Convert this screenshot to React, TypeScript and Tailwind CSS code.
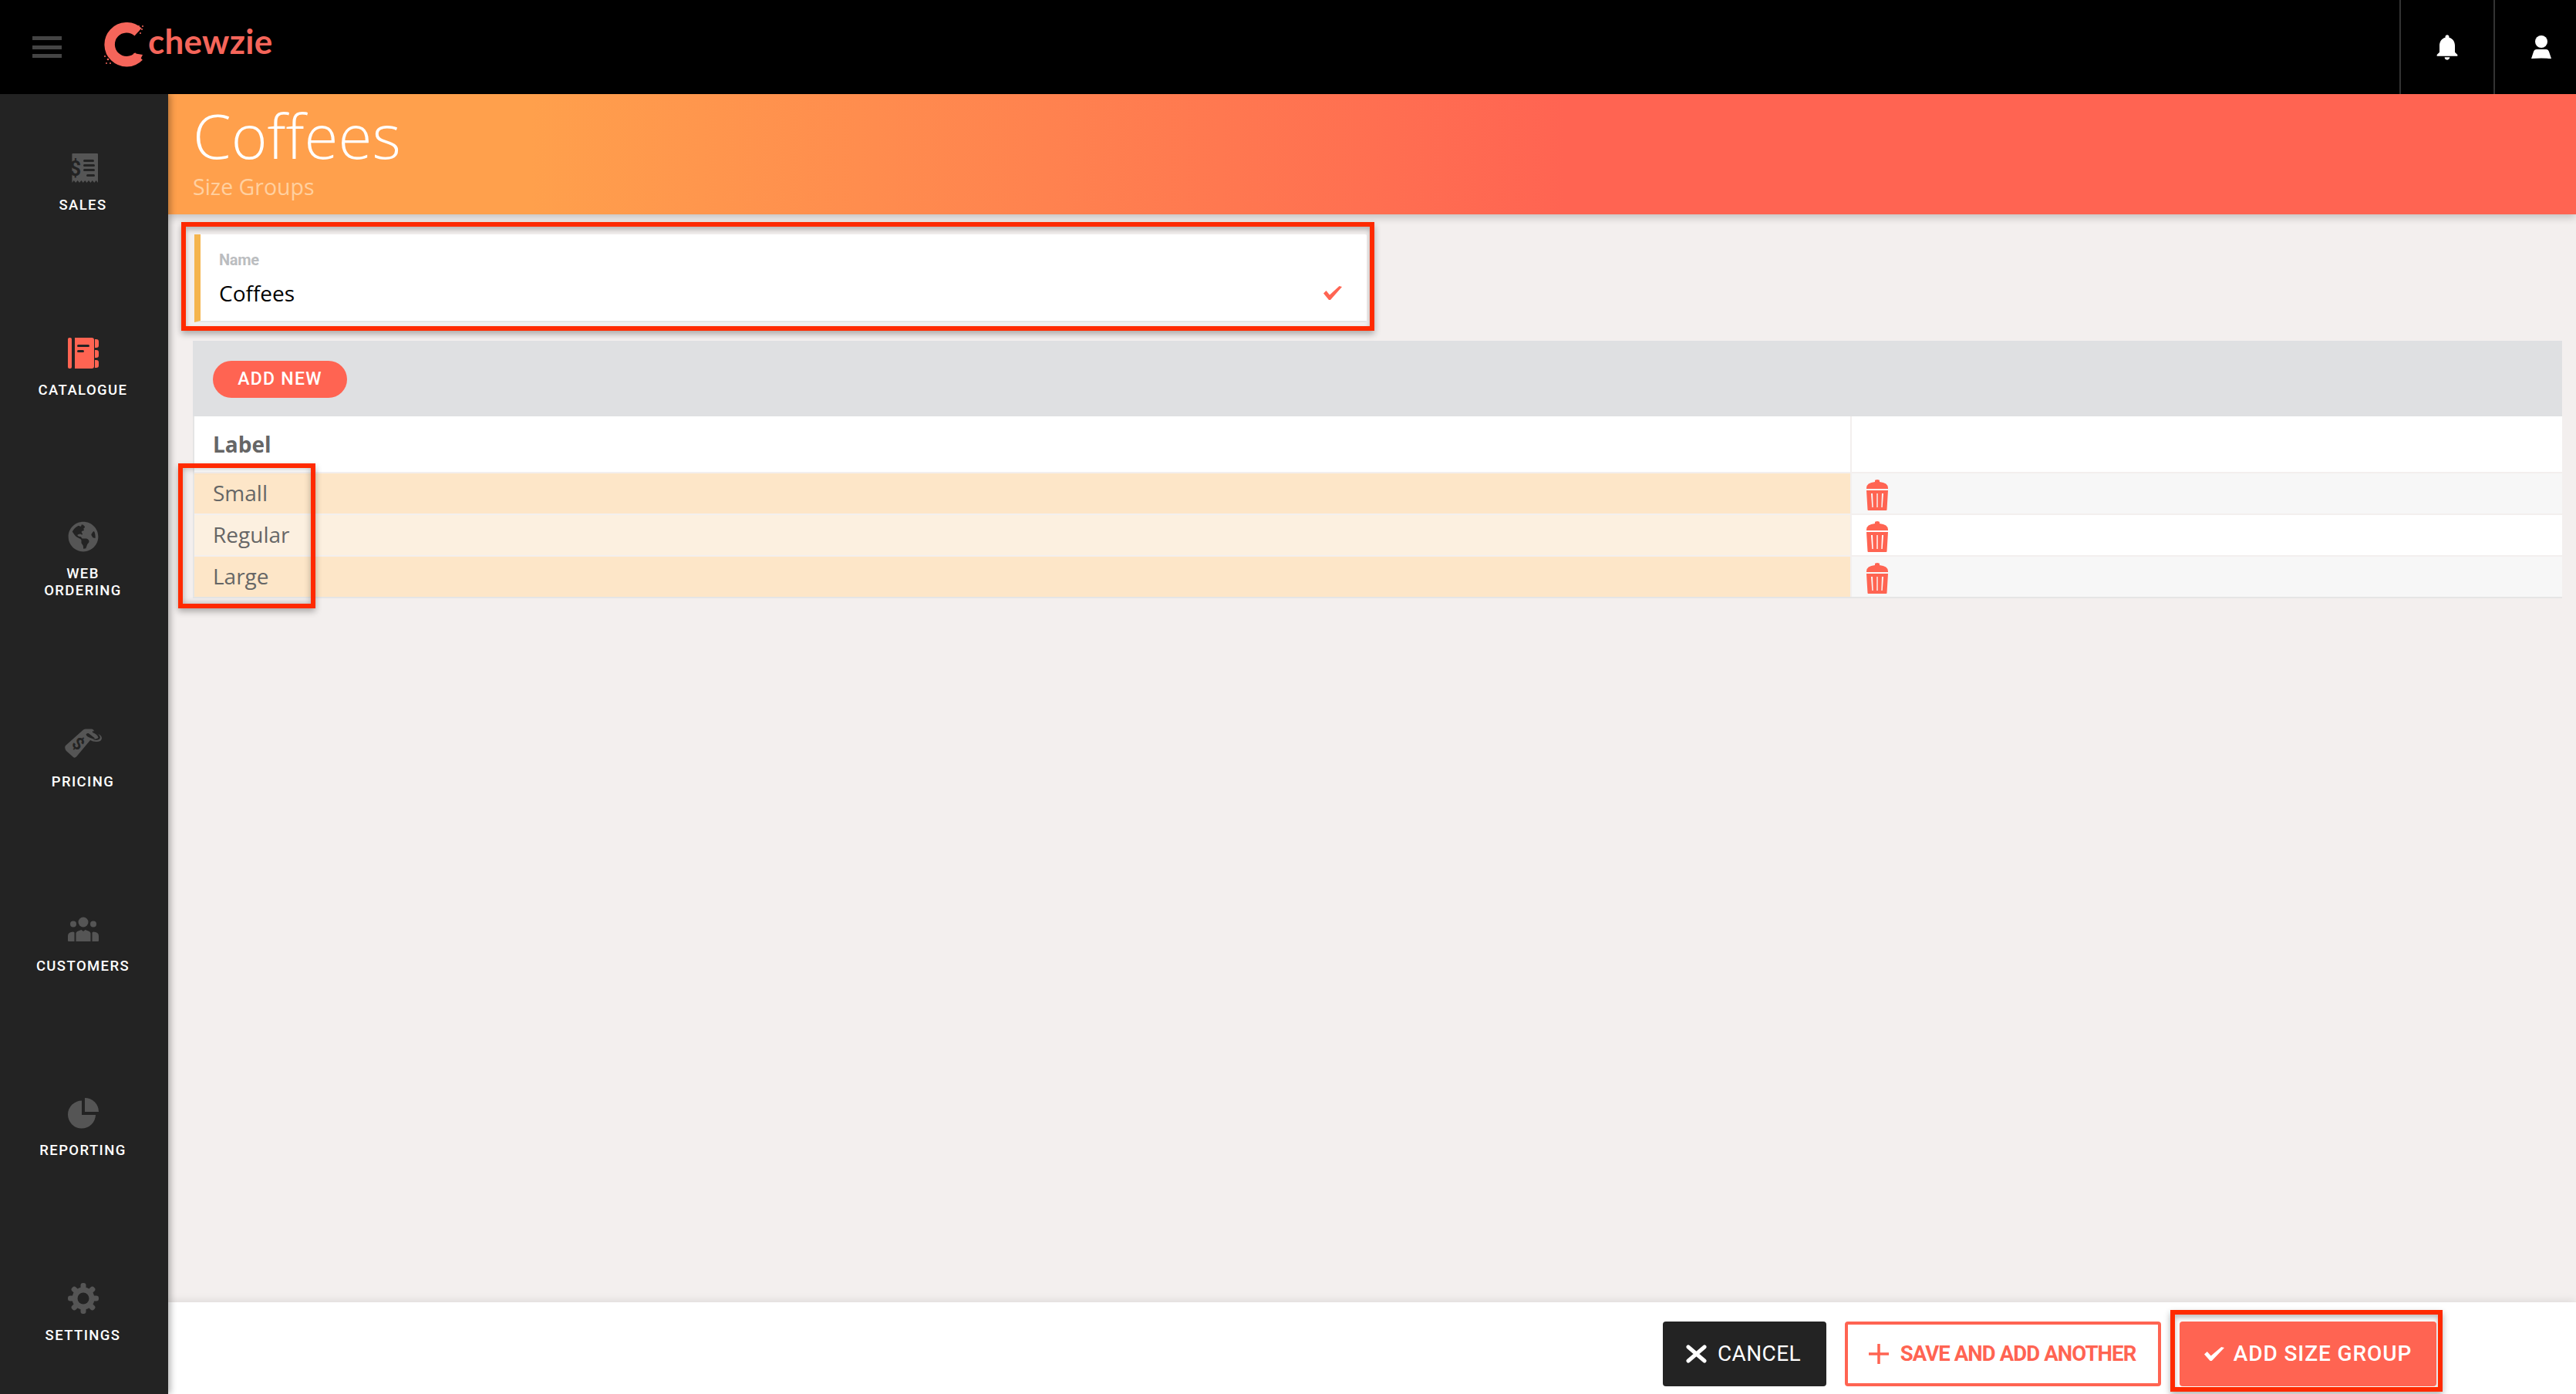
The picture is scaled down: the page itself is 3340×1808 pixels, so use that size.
import React from "react";
import { MdNotifications } from "react-icons/md";
import { FaGlobeAmericas } from "react-icons/fa";

const Receipt = () => (
  <svg viewBox="0 0 40 40" className="w-[40px] h-[40px]" fill="#555">
    <path d="M2 1h36a1 1 0 0 1 1 1v37l-2.400-3-2.400 3-2.400-3-2.400 3-2.400-3-2.400 3-2.400-3-2.400 3-2.400-3-2.400 3-2.400-3-2.400 3-2.400-3-2.400 3V2a1 1 0 0 1 1-1z" />
    <text x="9.500" y="30" fontSize="27" fontWeight="700" fontFamily="Roboto, sans-serif" textAnchor="middle" fill="#232323">$</text>
    <g fill="#232323">
      <rect x="20" y="9" width="14" height="3" rx="1.500" />
      <rect x="20" y="15" width="15" height="3" rx="1.500" />
      <rect x="20" y="21" width="15" height="3" rx="1.500" />
      <rect x="24" y="28" width="11" height="3" rx="1.500" />
    </g>
  </svg>
);

const Catalogue = () => (
  <svg viewBox="0 0 40 40" className="w-[40px] h-[40px]" fill="#ff6452">
    <rect x="0" y="0" width="5" height="40" rx="2" />
    <path d="M9 0h22a3 3 0 0 1 3 3v34a3 3 0 0 1-3 3H9z" />
    <path d="M35 2h2a3 3 0 0 1 3 3v5a3 3 0 0 1-3 3h-2zM35 16h2a3 3 0 0 1 3 3v4a3 3 0 0 1-3 3h-2zM35 29h2a3 3 0 0 1 3 3v4a3 3 0 0 1-3 3h-2z" />
    <rect x="12" y="9" width="16" height="3" rx="1.500" fill="#232323" />
    <rect x="12" y="16" width="9" height="3" rx="1.500" fill="#232323" />
  </svg>
);

const Tag = () => (
  <svg viewBox="0 0 48 40" className="w-[48px] h-[40px] -mt-[3px]" fill="#555">
    <path d="M1 22 24 1.500Q25.500.5 27 .5L35 .5Q38 1 38 4L41 6Q48 8 48 12.500 47.500 17 41 17 36 17 33 15L15 36.500Q13 38.500 11 37L2 29Q-1 25 1 22z" />
    <path d="M27.500 7.500Q30 5 32 7L39 12.500Q37 14 33 12 28 10 27.500 7.500z" fill="#232323" />
    <path d="M36 3Q44 5 46 11 46 14.500 41 15 38.500 15 36 13.500 42 14 43.500 11.500 42 7 36 5z" fill="#232323" />
    <text x="17" y="27" fontSize="22" fontWeight="700" fontFamily="Roboto, sans-serif" textAnchor="middle" fill="#232323" transform="rotate(40 17 20)">$</text>
  </svg>
);

const Customers = () => (
  <svg viewBox="0 0 40 40" className="w-[40px] h-[40px]" fill="#555">
    <circle cx="20" cy="11" r="6.500" />
    <circle cx="7" cy="13.500" r="4" />
    <circle cx="33" cy="13.500" r="4" />
    <path d="M10.500 26q0-2.500 3-3.500l4-1.500 2.500 2 2.500-2 4 1.500q3 1 3 3.500V36h-19z" />
    <path d="M0 29q0-4 4-5l3-.5 1.500 1v11.500H1q-1 0-1-1zM40 29q0-4-4-5l-3-.5-1.500 1v11.500H39q1 0 1-1z" />
  </svg>
);

const Pie = () => (
  <svg viewBox="0 0 40 40" className="w-[40px] h-[40px]" fill="#555">
    <path d="M18 3.600V22h18A18 18 0 1 1 18 3.600z" />
    <path d="M22 0a18 18 0 0 1 18 18H22z" />
  </svg>
);

const Gear = () => (
  <svg viewBox="0 0 40 40" className="w-[40px] h-[40px]">
    <g fill="#555">
      <circle cx="20" cy="20" r="14.500" />
      {[0, 45, 90, 135, 180, 225, 270, 315].map((a) => (
        <rect key={a} x="16.500" y="0" width="7" height="10" rx="3" transform={`rotate(${a} 20 20)`} />
      ))}
    </g>
    <circle cx="20" cy="20" r="7.500" fill="#232323" />
  </svg>
);

const Trash = () => (
  <svg viewBox="0 0 28 40" className="w-[28px] h-[40px]" fill="#ff6452">
    <path d="M11 3V1.500Q11 0 14 0t3 1.500V3q11 1 11 8v1H0v-1q0-7 11-8z" />
    <path fillRule="evenodd" d="M0 14h28l-1.500 25q0 1-1 1h-23q-1 0-1-1zM6 18l1.300 18h1.400L8 18zM13.300 18v18h1.400V18zM20 18l-.700 18h1.400L22 18z" />
  </svg>
);

const Person = () => (
  <svg viewBox="0 0 26 30" className="w-[26px] h-[30px]" fill="#fff">
    <circle cx="13" cy="8" r="8" />
    <path d="M0 30 3 21Q4 18 7 18h12q3 0 4 3l3 9q-13-1-26 0z" />
  </svg>
);

const Check = ({ w, h, color }: { w: string; h: string; color: string }) => (
  <svg viewBox="0 0 24 18" preserveAspectRatio="none" className={`${w} ${h}`} fill={color}>
    <path d="M0 9.500 3.500 6 8 11.500 20.500 0 24 1 9 18H7z" />
  </svg>
);

const XIcon = () => (
  <svg viewBox="0 0 29 24" className="w-[29px] h-[24px]" fill="none" stroke="#fff" strokeWidth="5" strokeLinecap="round">
    <path d="M4 3 25 21M25 3 4 21" />
  </svg>
);

const PlusIcon = () => (
  <svg viewBox="0 0 26 26" className="w-[26px] h-[26px]" fill="none" stroke="#ff6452" strokeWidth="3.500">
    <path d="M13 0v26M0 13h26" />
  </svg>
);

const Logo = () => (
  <svg viewBox="0 0 54 58" className="w-[54px] h-[58px]" fill="none">
    <path d="M46 12.500A22 22 0 1 0 47 44" stroke="#f5655a" strokeWidth="13.500" />
    <path d="M40 40 52 42 47 52z" fill="#f5655a" />
    <g fill="#f5655a">
      <circle cx="46" cy="11" r="1" />
      <circle cx="49" cy="14" r="1" />
      <circle cx="51" cy="9" r="1" />
      <circle cx="47" cy="5" r="1" />
      <circle cx="52" cy="5" r="1" />
      <circle cx="3" cy="44" r="1" />
      <circle cx="7" cy="48" r="1.300" />
      <circle cx="10" cy="53" r="1" />
      <circle cx="5" cy="53" r="1" />
    </g>
  </svg>
);

const navItems = [
  { label: "SALES", icon: <Receipt />, h: "h-[240px]" },
  { label: "CATALOGUE", icon: <Catalogue />, h: "h-[238px]" },
  { label: "WEB ORDERING", icon: <FaGlobeAmericas size={40} color="#555" />, h: "h-[270px]" },
  { label: "PRICING", icon: <Tag />, h: "h-[239px]" },
  { label: "CUSTOMERS", icon: <Customers />, h: "h-[239px]" },
  { label: "REPORTING", icon: <Pie />, h: "h-[240px]" },
  { label: "SETTINGS", icon: <Gear />, h: "h-[80px]" },
];

const rows = [
  { label: "Small", bg: "bg-[#fde6c8]", cell: "bg-[#f7f7f7]" },
  { label: "Regular", bg: "bg-[#fcf0e0]", cell: "bg-white" },
  { label: "Large", bg: "bg-[#fde6c8]", cell: "bg-[#f7f7f7]" },
];

const sans = "font-['Open_Sans',sans-serif]";
const roboto = "font-['Roboto',sans-serif]";

export default function App() {
  return (
    <div className={`w-[3340px] h-[1808px] overflow-hidden flex flex-col bg-[#f3efee] ${sans}`}>
      <header className="h-[122px] shrink-0 bg-black flex items-center">
        <div className="ml-[42px] w-[38px] flex flex-col gap-[6.500px]">
          <div className="h-[5px] bg-[#444]" />
          <div className="h-[5px] bg-[#444]" />
          <div className="h-[5px] bg-[#444]" />
        </div>
        <div className="ml-[53px] flex items-center -mt-[6px]">
          <Logo />
          <span className="ml-[5px] -mt-[10px] text-[#f5655a] text-[44px] leading-none font-bold font-['Lato',sans-serif] tracking-[0.3px]">chewzie</span>
        </div>
        <div className="ml-auto flex h-full">
          <div className="w-[122px] border-l-2 border-[#333] flex items-center justify-center">
            <MdNotifications size={40} color="#fff" />
          </div>
          <div className="w-[107px] border-l-2 border-[#333] pl-[14px] flex items-center justify-center">
            <Person />
          </div>
        </div>
      </header>

      <div className="flex flex-1 min-h-0">
        <nav className="w-[218px] shrink-0 bg-[#232323] pt-[76px] relative z-20 shadow-[3px_0_8px_rgba(0,0,0,0.3)]">
          {navItems.map((n) => (
            <div key={n.label} className={`${n.h} flex flex-col items-center`}>
              <div className="h-[40px] w-[48px] -ml-[2px] flex items-center justify-center">{n.icon}</div>
              <div className={`mt-[18px] -ml-[3px] w-[180px] text-center text-white text-[18.500px] leading-[21.500px] font-medium tracking-[1.4px] ${roboto}`}>
                {n.label === "WEB ORDERING" ? (
                  <>
                    WEB
                    <br />
                    ORDERING
                  </>
                ) : (
                  n.label
                )}
              </div>
            </div>
          ))}
        </nav>

        <main className="flex-1 min-w-0 flex flex-col">
          <section className="h-[156px] shrink-0 pl-[32px] relative z-10 bg-[linear-gradient(90deg,#ffa04c_15%,#ff6452_58%)] shadow-[0_4px_10px_rgba(0,0,0,0.2)]">
            <h1 className="pt-[6px] text-white text-[80px] leading-[94px] font-light">Coffees</h1>
            <p className="text-[#ffd0a0] text-[28.500px] leading-[34px] mt-[3px]">Size Groups</p>
          </section>

          <div className="flex-1 min-h-0">
            <div className="ml-[17px] mt-[10px] w-[1547px] h-[141px] border-[6px] border-[#ff2a00] pl-[11px] pr-[4px] pt-[10px] shadow-[0_4px_8px_rgba(0,0,0,0.3),inset_0_4px_6px_rgba(0,0,0,0.25)]">
              <div className="h-[114px] bg-white border-l-[8px] border-[#f5b54e] border-b-2 border-b-[#e5e5e5] pl-[24px] pr-[32px] rounded-r-[2px] flex flex-col">
                <label className={`mt-[21px] text-[#bbbdc0] text-[20px] leading-[24px] font-bold tracking-[-0.3px] ${roboto}`}>Name</label>
                <div className="mt-[12px] flex items-center justify-between">
                  <span className="text-black text-[28px] leading-[38px]">Coffees</span>
                  <Check w="w-[24px]" h="h-[18px]" color="#ff6452" />
                </div>
              </div>
            </div>

            <div className="relative mt-[13px] ml-[32px] mr-[18px]">
              <div className="h-[98px] bg-[#dfe0e2] pl-[26px] pt-[2px] flex items-center">
                <button className={`h-[48px] w-[174px] rounded-full bg-[#ff6452] text-white text-[23px] font-medium tracking-[1.3px] ${roboto}`}>ADD NEW</button>
              </div>
              <div className="border-l-2 border-b-2 border-[#e5e5e5]">
                <div className="grid grid-cols-[2147px_1fr] h-[74px] bg-white border-b-2 border-[#f3efee]">
                  <div className="pl-[24px] flex items-center text-[#666] text-[28px] font-bold">Label</div>
                  <div className="border-l-2 border-[#f3efee]" />
                </div>
                {rows.map((r) => (
                  <div key={r.label} className="grid grid-cols-[2147px_1fr] h-[54px] border-b-2 border-[#f3efee] last:border-b-0 last:h-[52px]">
                    <div className={`${r.bg} pl-[24px] pb-[2px] flex items-center text-[#666] text-[28px]`}>{r.label}</div>
                    <div className={`${r.cell} border-l-2 border-[#f3efee] pl-[19px] pt-[4px] flex items-center`}>
                      <Trash />
                    </div>
                  </div>
                ))}
              </div>
              <div className="absolute left-[-19px] top-[159px] w-[178px] h-[188px] border-[6px] border-[#ff2a00] shadow-[0_4px_8px_rgba(0,0,0,0.3),inset_0_0_8px_rgba(0,0,0,0.3)]" />
            </div>
          </div>

          <footer className={`h-[119px] shrink-0 bg-white relative z-10 shadow-[0_-3px_10px_rgba(0,0,0,0.08)] pt-[10px] pr-[173px] flex justify-end items-start ${roboto}`}>
            <button className="mt-[15px] w-[212px] h-[84px] pr-[4px] rounded-[4px] bg-[#232323] text-white text-[28px] tracking-[0.4px] flex items-center justify-center gap-[13px]">
              <XIcon />
              CANCEL
            </button>
            <button className="ml-[24px] mt-[15px] w-[410px] h-[84px] pr-[2px] rounded-[4px] bg-white border-[4px] border-[#ff6452] text-[#ff6452] text-[27.500px] tracking-[-0.9px] font-bold flex items-center justify-center gap-[15px]">
              <PlusIcon />
              SAVE AND ADD ANOTHER
            </button>
            <div className="ml-[12px] w-[353px] h-[106px] border-[6px] border-[#ff2a00] pl-[6px] pt-[9px] shadow-[0_4px_8px_rgba(0,0,0,0.3),inset_0_4px_6px_rgba(0,0,0,0.25)]">
              <button className="w-[333px] h-[84px] rounded-[4px] bg-[#ff6452] text-white text-[28px] tracking-[0.9px] font-medium flex items-center justify-center gap-[12px]">
                <Check w="w-[26px]" h="h-[18px]" color="#fff" />
                ADD SIZE GROUP
              </button>
            </div>
          </footer>
        </main>
      </div>
    </div>
  );
}
